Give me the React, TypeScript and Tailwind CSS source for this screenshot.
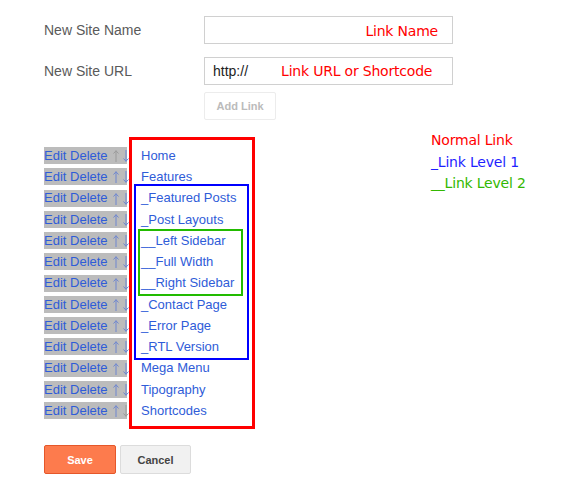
const links = [
  "Home",
  "Features",
  "_Featured Posts",
  "_Post Layouts",
  "__Left Sidebar",
  "__Full Width",
  "__Right Sidebar",
  "_Contact Page",
  "_Error Page",
  "_RTL Version",
  "Mega Menu",
  "Tipography",
  "Shortcodes",
];

const Arrow = ({ up, color }: { up: boolean; color: string }) => (
  <svg width="6" height="12" viewBox="0 0 6 12" className="block">
    <g
      stroke={color}
      strokeWidth="1"
      fill="none"
      transform={up ? undefined : "rotate(180 3 6)"}
    >
      <path d="M3 0.5V12" />
      <path d="M0.5 3.5L3 0.8L5.5 3.5" />
    </g>
  </svg>
);

const App = () => {
  return (
    <div className="w-[570px] h-[480px] bg-white font-['Liberation_Sans',Arial,sans-serif] pl-[44px] pt-[16px]">
      {/* Form */}
      <div className="flex items-center">
        <div className="w-[160px] text-[14px] text-[#5a5a5a]">New Site Name</div>
        <div className="w-[249px] h-[28px] border border-[#d0d0d0] flex items-center justify-end pr-[14px]">
          <span className="font-['DejaVu_Sans',Verdana,sans-serif] text-[14px] tracking-[-0.2px] text-[#ff0000] mt-[3px]">
            Link Name
          </span>
        </div>
      </div>
      <div className="flex items-center mt-[13px]">
        <div className="w-[160px] text-[14px] text-[#5a5a5a]">New Site URL</div>
        <div className="w-[249px] h-[28px] border border-[#d0d0d0] flex items-center pl-[8px]">
          <span className="text-[14px] text-[#222]">http://</span>
          <span className="ml-[33px] font-['DejaVu_Sans',Verdana,sans-serif] text-[14px] tracking-[-0.2px] text-[#ff0000]">
            Link URL or Shortcode
          </span>
        </div>
      </div>
      <div className="pl-[160px] mt-[7px]">
        <button className="w-[72px] h-[28px] border border-[#ececec] rounded-[2px] bg-white text-[11px] font-bold text-[#bbbbbb]">
          Add Link
        </button>
      </div>

      {/* Link list */}
      <div className="flex items-start mt-[17px]">
        <div className="pt-[8px] w-[83px]">
          {links.map((l, i) => (
            <div key={l} className="h-[21.25px] flex items-center">
              <div className="h-[17px] w-[83px] bg-[#bcbcbc] flex items-center text-[13px] text-[#2f5cd8] whitespace-nowrap">
                <span>Edit Delete</span>
                <span className="ml-[5px] mt-[1px]">
                  <Arrow up color={i === 0 ? "#9a9a9a" : "#6f86cf"} />
                </span>
                <span className="ml-[4px] mt-[1px]">
                  <Arrow up={false} color={i === links.length - 1 ? "#9a9a9a" : "#6f86cf"} />
                </span>
              </div>
            </div>
          ))}
        </div>
        <div className="relative ml-[2px] w-[126px] border-[3px] border-[#ff0000] pl-[9px] pt-[5px] pb-[5px]">
          {links.map((l) => (
            <div key={l} className="h-[21.25px] flex items-center text-[13px] text-[#2f5cd8] whitespace-nowrap">
              {l}
            </div>
          ))}
          <div className="absolute left-[2px] top-[44px] w-[115px] h-[176px] border-2 border-[#0000ff]" />
          <div className="absolute left-[6px] top-[89px] w-[105px] h-[67px] border-2 border-[#22bb00]" />
        </div>
        <div className="ml-[176px] -mt-[7px] font-['DejaVu_Sans',Verdana,sans-serif] text-[14px] tracking-[-0.2px] leading-[21.5px] whitespace-nowrap">
          <div className="text-[#ff0000]">Normal Link</div>
          <div className="text-[#1f1fff]">_Link Level 1</div>
          <div className="text-[#33b800]">__Link Level 2</div>
        </div>
      </div>

      {/* Buttons */}
      <div className="flex gap-[4px] mt-[16px]">
        <button className="w-[72px] h-[29px] rounded-[2px] border border-[#e5572a] bg-[#fd7b4d] text-[11px] font-bold text-white">
          Save
        </button>
        <button className="w-[71px] h-[29px] rounded-[2px] border border-[#dcdcdc] bg-[#f1f1f1] text-[11px] font-bold text-[#444]">
          Cancel
        </button>
      </div>
    </div>
  );
};

export default App;
